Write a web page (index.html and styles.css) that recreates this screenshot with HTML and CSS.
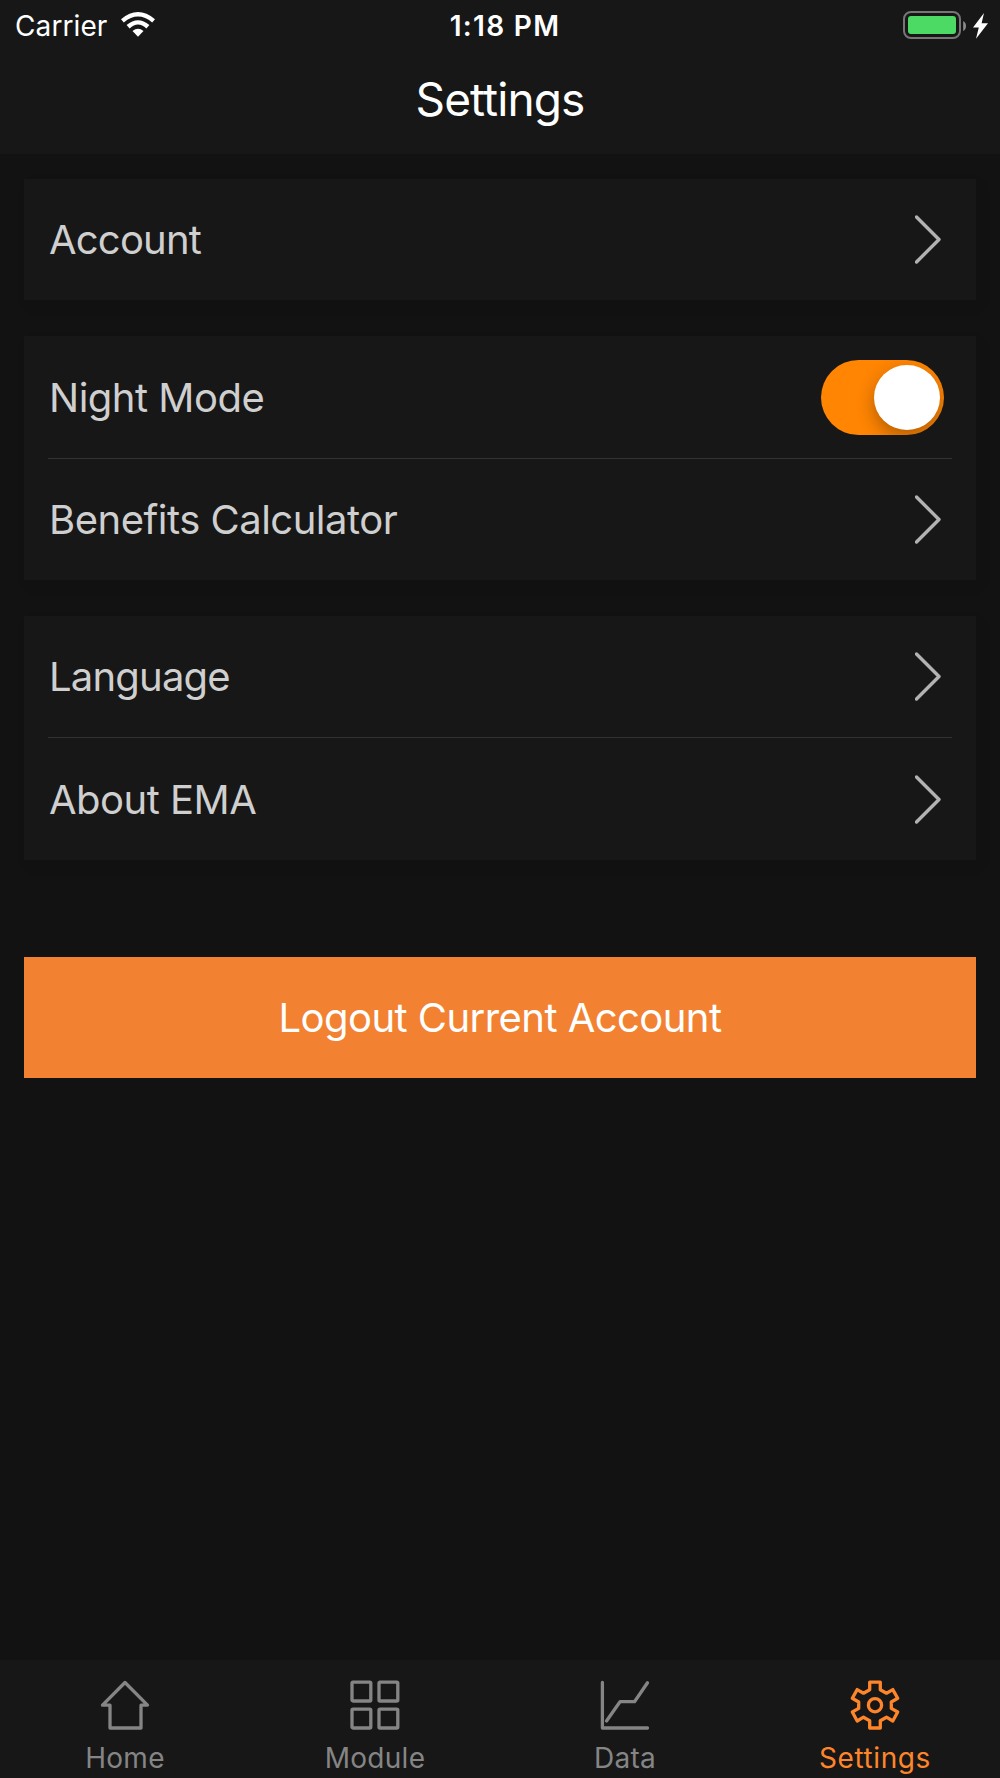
FILE: index.html
```html
<!DOCTYPE html>
<html lang="en">
<head>
    <meta charset="UTF-8">
    <meta name="viewport" content="width=device-width, initial-scale=1.0">
    <title>Settings</title>
    <link rel="stylesheet" href="styles.css">
</head>
<body>
    <header class="header">
        <div class="status-bar">
            <div class="status-left">
                <span class="carrier">Carrier</span>
                <svg class="wifi" width="34" height="25" viewBox="0 0 34 25">
                    <path fill="#fff" d="M0 7.2 Q17 -7.2 34 7.2 L31.2 10.4 Q17 -1.2 2.8 10.4 Z"/>
                    <path fill="#fff" d="M5.6 13 Q17 3.4 28.4 13 L25.4 16.4 Q17 8.4 8.6 16.4 Z"/>
                    <path fill="#fff" d="M11.5 19 Q17 14.4 22.5 19 L17 24.8 Z"/>
                </svg>
            </div>
            <span class="time">1:18 PM</span>
            <div class="status-right">
                <div class="battery"><div class="battery-level"></div></div>
                <svg width="4" height="10" viewBox="0 0 4 10"><path fill="#8b8b8b" d="M0.2 0 Q3 1.5 3 5 Q3 8.5 0.2 10 Z"/></svg>
                <svg class="bolt" width="15" height="26" viewBox="0 0 15 26"><path fill="#fff" d="M11 0 L0 14.5 H5.8 L3 25.8 L15 10.2 H8.6 Z"/></svg>
            </div>
        </div>
        <h1 class="title">Settings</h1>
    </header>

    <main class="content">
        <section class="card">
            <div class="row">
                <span class="label tight">Account</span>
                <svg class="chevron" width="26" height="49" viewBox="0 0 26 49"><path d="M1.5 2 L24 24.5 L1.5 47"/></svg>
            </div>
        </section>

        <section class="card">
            <div class="row row-tall">
                <span class="label">Night Mode</span>
                <div class="toggle"><div class="knob"></div></div>
            </div>
            <div class="row divided row-short">
                <span class="label">Benefits Calculator</span>
                <svg class="chevron" width="26" height="49" viewBox="0 0 26 49"><path d="M1.5 2 L24 24.5 L1.5 47"/></svg>
            </div>
        </section>

        <section class="card">
            <div class="row">
                <span class="label tight">Language</span>
                <svg class="chevron" width="26" height="49" viewBox="0 0 26 49"><path d="M1.5 2 L24 24.5 L1.5 47"/></svg>
            </div>
            <div class="row divided">
                <span class="label">About EMA</span>
                <svg class="chevron" width="26" height="49" viewBox="0 0 26 49"><path d="M1.5 2 L24 24.5 L1.5 47"/></svg>
            </div>
        </section>

        <button class="logout">Logout Current Account</button>
    </main>

    <nav class="tab-bar">
        <div class="tab">
            <svg class="tab-icon" width="50" height="50" viewBox="0 0 50 50"><path d="M25 2.5 L47.5 25.2 H41 V48 H10 V25.2 H2.5 Z"/></svg>
            <span>Home</span>
        </div>
        <div class="tab">
            <svg class="tab-icon" width="50" height="50" viewBox="0 0 50 50">
                <rect x="2" y="2.2" width="18.8" height="18.8" rx="1"/>
                <rect x="29" y="2.2" width="18.8" height="18.8" rx="1"/>
                <rect x="2" y="29.2" width="18.8" height="18.8" rx="1"/>
                <rect x="29" y="29.2" width="18.8" height="18.8" rx="1"/>
            </svg>
            <span>Module</span>
        </div>
        <div class="tab">
            <svg class="tab-icon" width="50" height="50" viewBox="0 0 50 50">
                <path d="M2.4 2.4 V48 H47.5"/>
                <path d="M6.5 41 L20 21.7 H34.5 L47.5 2.8"/>
            </svg>
            <span>Data</span>
        </div>
        <div class="tab active">
            <svg class="tab-icon" width="50" height="50" viewBox="0 0 50 50">
                <path d="M19.7 2.2 H30.3 V9.7 L36.5 13.2 L42.8 9.6 L47.7 18.3 L41.3 22 V28.4 L47.7 32 L42.8 41 L36.5 37.2 L30.3 40.7 V48 H19.7 V40.7 L13.5 37.2 L7.2 41 L2.3 32 L8.7 28.4 V22 L2.3 18.3 L7.2 9.6 L13.5 13.2 L19.7 9.7 Z"/>
                <circle cx="25" cy="25.2" r="6.6"/>
            </svg>
            <span>Settings</span>
        </div>
    </nav>
</body>
</html>
```
FILE: styles.css
```css
* {
    box-sizing: border-box;
}

body {
    font-family: 'Inter', sans-serif;
    background-color: #121212;
    margin: 0;
    height: 1778px;
    display: flex;
    flex-direction: column;
    overflow: hidden;
}

svg {
    display: block;
    flex: none;
}

.header {
    height: 154px;
    background-color: #171717;
    color: #fff;
}

.status-bar {
    height: 50px;
    display: grid;
    grid-template-columns: 1fr auto 1fr;
    align-items: center;
    padding: 0 12px 0 15px;
    font-size: 28px;
    line-height: 50px;
}

.status-left,
.status-right {
    display: flex;
    align-items: center;
}

.status-right {
    justify-content: flex-end;
}

.carrier {
    letter-spacing: 0.1px;
    padding-top: 1px;
}

.wifi {
    margin-left: 14px;
    margin-bottom: 2px;
}

.time {
    font-weight: 600;
    letter-spacing: 1.3px;
    padding: 1px 0 0 7px;
}

.battery {
    width: 58px;
    height: 28px;
    border: 2px solid #767676;
    border-radius: 8px;
    padding: 3px;
    margin-right: 2px;
    margin-bottom: 1px;
}

.battery-level {
    height: 18px;
    background-color: #4cd964;
    border-radius: 3px;
}

.bolt {
    margin-left: 6px;
}

.title {
    margin: 0;
    font-size: 46px;
    font-weight: 400;
    letter-spacing: -0.9px;
    line-height: 99px;
    text-align: center;
}

.content {
    flex: 1;
    padding: 25px 24px 0;
}

.card {
    background-color: #171717;
    padding: 0 24px;
    margin-bottom: 36px;
    box-shadow: 4px 6px 12px rgba(0, 0, 0, 0.07);
}

.row {
    height: 121px;
    display: flex;
    align-items: center;
    justify-content: space-between;
    padding: 0 11.5px 0 1px;
}

.divided {
    height: 123px;
    border-top: 1px solid #323232;
}

.row-tall {
    height: 122px;
}

.row-short {
    height: 122px;
}

.label {
    font-size: 40px;
    letter-spacing: -0.5px;
    color: #cfcfcf;
}

.tight {
    letter-spacing: -0.8px;
}

.chevron path {
    fill: none;
    stroke: #b2b2b2;
    stroke-width: 3.4;
    stroke-linecap: round;
    stroke-linejoin: round;
}

.toggle {
    width: 123px;
    height: 75px;
    border-radius: 38px;
    background-color: #ff8503;
    padding: 5px 4px;
    display: flex;
    justify-content: flex-end;
    margin-right: -3.5px;
    margin-top: 1px;
    overflow: hidden;
}

.knob {
    width: 66px;
    height: 65px;
    border-radius: 50%;
    background-color: #fff;
    box-shadow: 0 7px 18px rgba(0, 0, 0, 0.3);
}

.logout {
    display: block;
    width: 100%;
    height: 121px;
    margin-top: 96.5px;
    padding: 1px 0 0;
    border: none;
    background-color: #f28232;
    color: #fff;
    font-family: inherit;
    font-size: 40px;
    letter-spacing: -0.55px;
}

.tab-bar {
    height: 118px;
    background-color: #171717;
    display: flex;
}

.tab {
    flex: 1;
    display: flex;
    flex-direction: column;
    align-items: center;
    padding-top: 20px;
    font-size: 28px;
    line-height: 34px;
    letter-spacing: 0.3px;
    color: #858585;
}

.tab span {
    margin-top: 11px;
}

.tab-icon {
    fill: none;
    stroke: #858585;
    stroke-width: 3.3;
    stroke-linecap: round;
    stroke-linejoin: round;
}

.active {
    color: #ff852b;
    letter-spacing: 0.6px;
}

.active .tab-icon {
    stroke: #ff852b;
}
```
